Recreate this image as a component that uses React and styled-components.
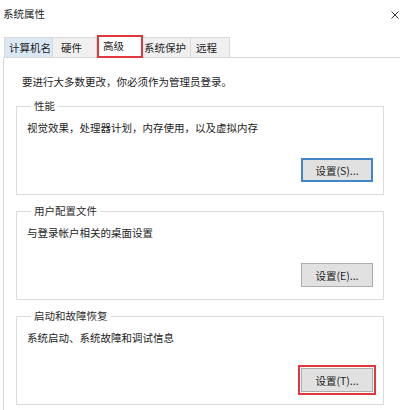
import React from "react";
import styled, { createGlobalStyle } from "styled-components";

const GlobalStyle = createGlobalStyle`
  html, body {
    margin: 0;
    padding: 0;
    background: #ffffff;
    overflow: hidden;
  }
  body {
    font-family: "Noto Sans CJK SC", "Microsoft YaHei", "Noto Sans", sans-serif;
    font-size: 10.5px;
    color: #1c1c1c;
  }
  * { box-sizing: border-box; }
`;

const Window = styled.div`
  width: 400px;
  height: 410px;
  display: flex;
  flex-direction: column;
  background: #fff;
  overflow: hidden;
`;

const TitleBar = styled.div`
  height: 28px;
  display: flex;
  align-items: center;
  justify-content: space-between;
  padding: 0 1px 0 3px;
`;

const Title = styled.span`
  line-height: 14px;
  color: #1c1c1c;
`;

const CloseIcon = () => (
  <svg width="8" height="8" viewBox="0 0 8 8" style={{ display: "block" }}>
    <path d="M0.5 0.5 L7.5 7.5 M7.5 0.5 L0.5 7.5" stroke="#333" strokeWidth="1" fill="none" />
  </svg>
);

const CloseBtn = styled.span`
  display: flex;
  align-items: center;
  margin-top: 2px;
`;

const TabStrip = styled.div`
  height: 29px;
  display: flex;
  align-items: flex-end;
  padding-left: 4px;
  position: relative;
  z-index: 1;
`;

const Tab = styled.div`
  width: ${(p) => p.$w}px;
  height: ${(p) => (p.$selected ? 23 : 20)}px;
  margin-bottom: ${(p) => (p.$selected ? -1 : 0)}px;
  padding-left: ${(p) => p.$pad}px;
  display: flex;
  align-items: center;
  line-height: 14px;
  white-space: nowrap;
  background: ${(p) => (p.$selected ? "#ffffff" : p.$hover ? "#dae8f5" : "#f0f0f0")};
  border-top: 1px solid #d9d9d9;
  border-right: 1px solid #d9d9d9;
  border-left: ${(p) => (p.$first ? "1px solid #d9d9d9" : "none")};
  ${(p) =>
    p.$marked &&
    `
    border: 2px solid #e0383c;
    padding-bottom: 2px;
  `}
`;

const Panel = styled.div`
  flex: 1;
  margin-left: 3px;
  border-top: 1px solid #d9d9d9;
  border-left: 1px solid #d9d9d9;
  padding: 17px 0 0 12px;
  display: flex;
  flex-direction: column;
`;

const Info = styled.div`
  padding-left: 6px;
  line-height: 14px;
`;

const Group = styled.fieldset`
  width: 368px;
  margin: ${(p) => (p.$first ? 10 : 9)}px 0 0 0;
  padding: 8px 10px 12px 10px;
  border: 1px solid #dcdcdc;
  min-width: 0;
  display: flex;
  flex-direction: column;
`;

const Legend = styled.legend`
  margin-left: 4px;
  padding: 0 3px;
  line-height: 14px;
  color: #2a2a2a;
`;

const Desc = styled.div`
  line-height: 14px;
`;

const ButtonRow = styled.div`
  display: flex;
  justify-content: flex-end;
  margin-top: 23px;
`;

const Button = styled.button`
  width: 72px;
  height: 24px;
  padding: 0;
  font-family: inherit;
  font-size: 10.5px;
  color: #1c1c1c;
  background: #e1e1e1;
  border: ${(p) => (p.$focused ? "2px solid #4286c6" : "1px solid #adadad")};
  display: flex;
  align-items: center;
  justify-content: center;
  ${(p) =>
    p.$marked &&
    `
    outline: 2px solid #e0383c;
    outline-offset: 1px;
  `}
`;

const tabs = [
  { label: "计算机名", w: 49, pad: 4, hover: true, first: true },
  { label: "硬件", w: 44, pad: 8 },
  { label: "高级", w: 46, pad: 4, selected: true, marked: true },
  { label: "系统保护", w: 48, pad: 1 },
  { label: "远程", w: 39, pad: 5 },
];

const groups = [
  {
    legend: "性能",
    desc: "视觉效果，处理器计划，内存使用，以及虚拟内存",
    btn: "设置(S)...",
    focused: true,
  },
  {
    legend: "用户配置文件",
    desc: "与登录帐户相关的桌面设置",
    btn: "设置(E)...",
  },
  {
    legend: "启动和故障恢复",
    desc: "系统启动、系统故障和调试信息",
    btn: "设置(T)...",
    marked: true,
  },
];

export default function App() {
  return (
    <>
      <GlobalStyle />
      <Window>
        <TitleBar>
          <Title>系统属性</Title>
          <CloseBtn>
            <CloseIcon />
          </CloseBtn>
        </TitleBar>
        <TabStrip>
          {tabs.map((t) => (
            <Tab
              key={t.label}
              $w={t.w}
              $pad={t.pad}
              $hover={t.hover}
              $first={t.first}
              $selected={t.selected}
              $marked={t.marked}
            >
              {t.label}
            </Tab>
          ))}
        </TabStrip>
        <Panel>
          <Info>要进行大多数更改，你必须作为管理员登录。</Info>
          {groups.map((g, i) => (
            <Group key={g.legend} $first={i === 0}>
              <Legend>{g.legend}</Legend>
              <Desc>{g.desc}</Desc>
              <ButtonRow>
                <Button $focused={g.focused} $marked={g.marked}>
                  {g.btn}
                </Button>
              </ButtonRow>
            </Group>
          ))}
        </Panel>
      </Window>
    </>
  );
}
